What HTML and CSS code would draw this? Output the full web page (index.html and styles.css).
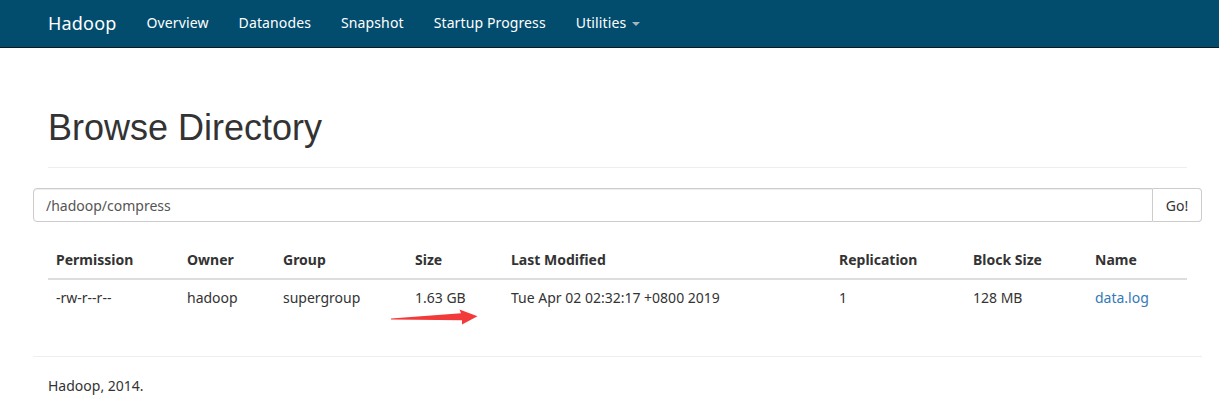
FILE: index.html
```html
<!DOCTYPE html>
<html>
<head>
<meta charset="utf-8">
<title>Browsing HDFS</title>
<link rel="stylesheet" href="styles.css">
</head>
<body>
<header class="navbar">
  <a class="brand" href="#">Hadoop</a>
  <nav class="nav">
    <a href="#">Overview</a>
    <a href="#">Datanodes</a>
    <a href="#">Snapshot</a>
    <a href="#">Startup Progress</a>
    <a href="#" class="dropdown">Utilities <span class="caret"></span></a>
  </nav>
</header>
<main class="container">
  <div class="page-header">
    <h1>Browse Directory</h1>
  </div>
  <form class="input-group">
    <input class="path" type="text" value="/hadoop/compress">
    <button class="go" type="button">Go!</button>
  </form>
  <div class="table-wrap">
    <table class="table">
      <colgroup>
        <col class="c-perm"><col class="c-owner"><col class="c-group"><col class="c-size">
        <col class="c-mod"><col class="c-rep"><col class="c-block"><col class="c-name">
      </colgroup>
      <thead>
        <tr>
          <th>Permission</th><th>Owner</th><th>Group</th><th>Size</th>
          <th>Last Modified</th><th>Replication</th><th>Block Size</th><th>Name</th>
        </tr>
      </thead>
      <tbody>
        <tr>
          <td>-rw-r--r--</td><td>hadoop</td><td>supergroup</td><td>1.63 GB</td>
          <td>Tue Apr 02 02:32:17 +0800 2019</td><td>1</td><td>128 MB</td>
          <td><a href="#">data.log</a></td>
        </tr>
      </tbody>
    </table>
  </div>
  <hr class="footer-rule">
  <footer class="footer">Hadoop, 2014.</footer>
</main>
<svg class="arrow" width="100" height="30" viewBox="380 300 100 30">
  <polygon points="391,318.6 461,313.2 459.5,309.5 477.5,316.2 462,324.5 462,320.2 391,319.4" fill="#f23a3a"/>
</svg>
</body>
</html>
```
FILE: styles.css
```css
* { box-sizing: border-box; }
html, body { margin: 0; padding: 0; background: #fff; }
body {
  font-family: "Noto Sans", "Open Sans", sans-serif;
  font-size: 14px;
  line-height: 20px;
  color: #333;
  position: relative;
}
a { color: #337ab7; text-decoration: none; }

.navbar {
  height: 48px;
  background: #024d6e;
  border-bottom: 1px solid #0b1a22;
  display: flex;
  align-items: center;
  padding-left: 48px;
}
.brand {
  color: #fff;
  font-size: 18px;
  line-height: 20px;
  margin-right: 15px;
  padding-bottom: 2px;
  letter-spacing: 0.2px;
}
.nav { display: flex; }
.nav a {
  color: #fff;
  font-size: 14px;
  padding: 0 15px;
  line-height: 20px;
  padding-bottom: 2px;
  letter-spacing: 0.12px;
}
.caret {
  display: inline-block;
  width: 0; height: 0;
  margin-left: 2px;
  vertical-align: middle;
  border-top: 4px solid #a8b4bb;
  border-left: 4px solid transparent;
  border-right: 4px solid transparent;
}

.container {
  margin-left: 33px;
  width: 1169px;
}
.page-header {
  margin: 0 15px 20px;
  padding-bottom: 9px;
  border-bottom: 1px solid #eee;
}
h1 {
  font-family: "Liberation Sans", Arial, sans-serif;
  font-weight: normal;
  font-size: 36px;
  line-height: 40px;
  margin: 60px 0 10px;
  color: #333;
}

.input-group { display: flex; height: 34px; margin: 0; }
.path {
  flex: 1;
  height: 34px;
  border: 1px solid #ccc;
  border-radius: 4px 0 0 4px;
  padding: 6px 12px;
  font-family: inherit;
  font-size: 14px;
  color: #555;
  box-shadow: inset 0 1px 1px rgba(0,0,0,.075);
  outline: none;
}
.go {
  width: 49px;
  height: 34px;
  border: 1px solid #ccc;
  border-left: 0;
  border-radius: 0 4px 4px 0;
  background: #fff;
  font-family: inherit;
  font-size: 14px;
  color: #333;
  padding: 0;
}

.table-wrap { padding: 0 15px; margin-top: 20px; }
.table {
  width: 100%;
  border-collapse: collapse;
  table-layout: fixed;
  margin-bottom: 40px;
}
.c-perm { width: 131px; }
.c-owner { width: 96px; }
.c-group { width: 132px; }
.c-size { width: 96px; }
.c-mod { width: 328px; }
.c-rep { width: 134px; }
.c-block { width: 122px; }
.c-name { width: 100px; }
.table th, .table td {
  text-align: left;
  padding: 8px;
  line-height: 20px;
  white-space: nowrap;
}
.table th {
  font-weight: bold;
  border-bottom: 2px solid #ddd;
}

.footer-rule {
  margin: 0;
  border: 0;
  border-top: 1px solid #eee;
}
.footer {
  padding: 19px 15px 0;
}

.arrow {
  position: absolute;
  left: 380px;
  top: 300px;
}
```
